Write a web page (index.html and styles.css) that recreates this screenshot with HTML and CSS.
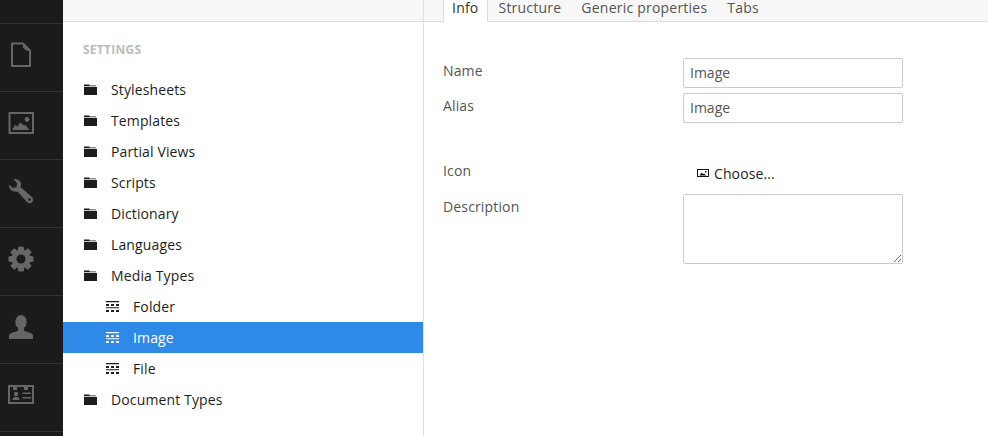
FILE: index.html
```html
<!DOCTYPE html>
<html lang="en">
<head>
<meta charset="utf-8">
<title>Settings - Media Types - Image</title>
<link rel="stylesheet" href="styles.css">
</head>
<body>
<div class="app">
  <nav class="rail">
    <div class="rail-item rail-top"></div>
    <div class="rail-item">
      <svg class="rail-icon" viewBox="0 0 26 26" width="26" height="26"><path fill="none" stroke="#666" stroke-width="2" stroke-linejoin="round" d="M4 1.500H15L22 8.500V24H4Z"/><path fill="#666" d="M15 2L21.500 8.500H18L15 5.500Z"/></svg>
    </div>
    <div class="rail-item">
      <svg class="rail-icon" viewBox="0 0 26 26" width="26" height="26"><rect x="1.500" y="3" width="23.500" height="20" fill="none" stroke="#666" stroke-width="2"/><circle cx="19" cy="9.500" r="2.400" fill="#666"/><path fill="#666" d="M4 20L7 15L9.500 16.500L12 12.500L16 15.500L17.500 15L21.500 20Z"/></svg>
    </div>
    <div class="rail-item">
      <svg class="rail-icon" viewBox="0 0 26 26" width="26" height="26"><path fill="#666" d="M5.500 1C8 0.500 12 1.500 13 5C13.300 6.500 13 8 12.500 9L24 19C25.500 20.500 25.500 23 24 24.300C22.500 25.700 20.500 25.500 19 24L9.500 13.500C7.500 14 4.500 13.500 3 12C1.500 10.500 0.800 8.500 1 6.500L5 10L8.500 9L9.200 5.500Z"/><circle cx="21.500" cy="21.500" r="1.300" fill="#1b1b1b"/></svg>
    </div>
    <div class="rail-item">
      <svg class="rail-icon" viewBox="0 0 26 26" width="26" height="26"><g fill="#666" transform="translate(13 13)"><circle r="9.500"/><rect x="-3" y="-12.500" width="6" height="25" rx="1.500"/><rect x="-3" y="-12.500" width="6" height="25" rx="1.500" transform="rotate(45)"/><rect x="-3" y="-12.500" width="6" height="25" rx="1.500" transform="rotate(90)"/><rect x="-3" y="-12.500" width="6" height="25" rx="1.500" transform="rotate(135)"/></g><circle cx="13" cy="13" r="4.500" fill="#1b1b1b"/></svg>
    </div>
    <div class="rail-item">
      <svg class="rail-icon" viewBox="0 0 26 26" width="26" height="26"><ellipse cx="13" cy="8" rx="5.700" ry="7" fill="#666"/><path fill="#666" d="M10 13V16.500C8 18 2 18.500 1 21V25H25V21C24 18.500 18 18 16 16.500V13Z"/></svg>
    </div>
    <div class="rail-item">
      <svg class="rail-icon" viewBox="0 0 26 26" width="26" height="26"><rect x="1" y="4" width="24" height="17" fill="none" stroke="#666" stroke-width="2"/><path fill="#666" d="M5 3H9V8H5ZM16 3H20V8H16ZM14.500 10.500H23V12H14.500ZM14.500 15H23V16.500H14.500Z"/><circle cx="8" cy="12" r="2.200" fill="#666"/><path fill="#666" d="M4.500 18C4.500 15.500 6 15 8 15C10 15 11.500 15.500 11.500 18Z"/></svg>
    </div>
  </nav>
  <aside class="tree-panel">
    <div class="strip"></div>
    <h5 class="tree-title">SETTINGS</h5>
    <ul class="tree">
      <li class="node"><svg class="folder" viewBox="0 0 13 11" width="13" height="11"><path d="M0 0.500H5.500V1.500H12V2.300H0ZM0 3H13V11H0Z"/></svg>Stylesheets</li>
      <li class="node"><svg class="folder" viewBox="0 0 13 11" width="13" height="11"><path d="M0 0.500H5.500V1.500H12V2.300H0ZM0 3H13V11H0Z"/></svg>Templates</li>
      <li class="node"><svg class="folder" viewBox="0 0 13 11" width="13" height="11"><path d="M0 0.500H5.500V1.500H12V2.300H0ZM0 3H13V11H0Z"/></svg>Partial Views</li>
      <li class="node"><svg class="folder" viewBox="0 0 13 11" width="13" height="11"><path d="M0 0.500H5.500V1.500H12V2.300H0ZM0 3H13V11H0Z"/></svg>Scripts</li>
      <li class="node"><svg class="folder" viewBox="0 0 13 11" width="13" height="11"><path d="M0 0.500H5.500V1.500H12V2.300H0ZM0 3H13V11H0Z"/></svg>Dictionary</li>
      <li class="node"><svg class="folder" viewBox="0 0 13 11" width="13" height="11"><path d="M0 0.500H5.500V1.500H12V2.300H0ZM0 3H13V11H0Z"/></svg>Languages</li>
      <li class="node"><svg class="folder" viewBox="0 0 13 11" width="13" height="11"><path d="M0 0.500H5.500V1.500H12V2.300H0ZM0 3H13V11H0Z"/></svg>Media Types</li>
      <li class="node child"><svg class="grid" viewBox="0 0 13 11" width="13" height="11"><path d="M0 0H13V1.200H0ZM0 3H3V5H0ZM5 3H8V5H5ZM10 3H13V5H10ZM0 6.200H13V7.200H0ZM0 9H3V11H0ZM5 9H8V11H5ZM10 9H13V11H10Z"/></svg>Folder</li>
      <li class="node child active"><svg class="grid" viewBox="0 0 13 11" width="13" height="11"><path d="M0 0H13V1.200H0ZM0 3H3V5H0ZM5 3H8V5H5ZM10 3H13V5H10ZM0 6.200H13V7.200H0ZM0 9H3V11H0ZM5 9H8V11H5ZM10 9H13V11H10Z"/></svg>Image</li>
      <li class="node child"><svg class="grid" viewBox="0 0 13 11" width="13" height="11"><path d="M0 0H13V1.200H0ZM0 3H3V5H0ZM5 3H8V5H5ZM10 3H13V5H10ZM0 6.200H13V7.200H0ZM0 9H3V11H0ZM5 9H8V11H5ZM10 9H13V11H10Z"/></svg>File</li>
      <li class="node"><svg class="folder" viewBox="0 0 13 11" width="13" height="11"><path d="M0 0.500H5.500V1.500H12V2.300H0ZM0 3H13V11H0Z"/></svg>Document Types</li>
    </ul>
  </aside>
  <main class="editor">
    <div class="tabs">
      <span class="tab current">Info</span>
      <span class="tab">Structure</span>
      <span class="tab">Generic properties</span>
      <span class="tab">Tabs</span>
    </div>
    <form class="form">
      <div class="row row-name"><label class="label">Name</label><input class="field" type="text" value="Image"></div>
      <div class="row row-alias"><label class="label">Alias</label><input class="field" type="text" value="Image"></div>
      <div class="row row-icon"><label class="label">Icon</label><span class="choose"><svg class="pic" viewBox="0 0 12 8" width="12" height="8"><rect x="0.500" y="0.500" width="11" height="7" fill="none" stroke="#111"/><path fill="#111" d="M2.500 6.500L4.500 3.500L6 5L7 4.500L9.500 6.500ZM8 2H9.500V3.500H8Z"/></svg>Choose...</span></div>
      <div class="row row-desc"><label class="label">Description</label><textarea class="field area"></textarea></div>
    </form>
  </main>
</div>
</body>
</html>
```
FILE: styles.css
```css
* { box-sizing: border-box; }
html, body { margin: 0; height: 100%; overflow: hidden; background: #fff; }
body { font-family: "Open Sans", sans-serif; font-size: 14px; color: #222; }
.app { display: flex; height: 436px; width: 988px; }

.rail { width: 63px; flex: none; background: #1b1b1b; }
.rail-item { height: 68px; border-bottom: 1px solid #333; padding: 0 21px 5px 0; display: flex; align-items: center; justify-content: center; }
.rail-top { height: 24px; padding: 0; }
.rail-icon { display: block; flex: none; }

.tree-panel { width: 361px; flex: none; border-right: 1px solid #e0e0e0; }
.strip { height: 22px; background: #f7f7f7; border-bottom: 1px solid #ddd; }
.tree-title { margin: 0; padding: 20px 0 0 20px; height: 52px; font-size: 12px; line-height: 16px; font-weight: 700; letter-spacing: 0.25px; color: #bbb; }
.tree { list-style: none; margin: 0; padding: 0; }
.node { height: 31px; line-height: 31px; padding-left: 21px; display: flex; align-items: center; color: #1d1d1d; letter-spacing: 0.13px; }
.node.child { padding-left: 43px; }
.node.active { background: #2e8ae6; color: #fff; }
.folder, .grid { flex: none; margin-right: 14px; fill: #1d1d1d; }
.active .grid { fill: #fff; }

.editor { flex: 1; min-width: 0; }
.tabs { height: 22px; background: #f7f7f7; border-bottom: 1px solid #ddd; display: flex; align-items: flex-start; padding-left: 19px; }
.tab { height: 21px; line-height: 15px; padding: 0 9px; color: #555; white-space: nowrap; margin-right: 2px; letter-spacing: 0.22px; }
.tab.current { height: 22px; background: #fff; border: 1px solid #ddd; border-top: 0; border-bottom: 0; padding: 0 8px; color: #333; }

.form { padding: 36px 0 0 19px; }
.row { display: flex; align-items: flex-start; }
.label { width: 240px; flex: none; color: #555; line-height: 20px; padding-top: 3px; letter-spacing: 0.15px; }
.field { width: 220px; height: 30px; border: 1px solid #ccc; border-radius: 2px; padding: 3px 6px 5px; font: 14px "Open Sans", sans-serif; color: #555; background: #fff; margin: 0; display: block; }
.area { height: 70px; resize: both; }
.row-alias { margin-top: 5px; }
.row-icon { margin-top: 35px; height: 36px; }
.choose { display: flex; align-items: center; padding: 0 0 0 14px; line-height: 20px; margin-top: 6px; color: #222; letter-spacing: 0.1px; }
.pic { margin: 0 5px 2px 0; flex: none; }
```
